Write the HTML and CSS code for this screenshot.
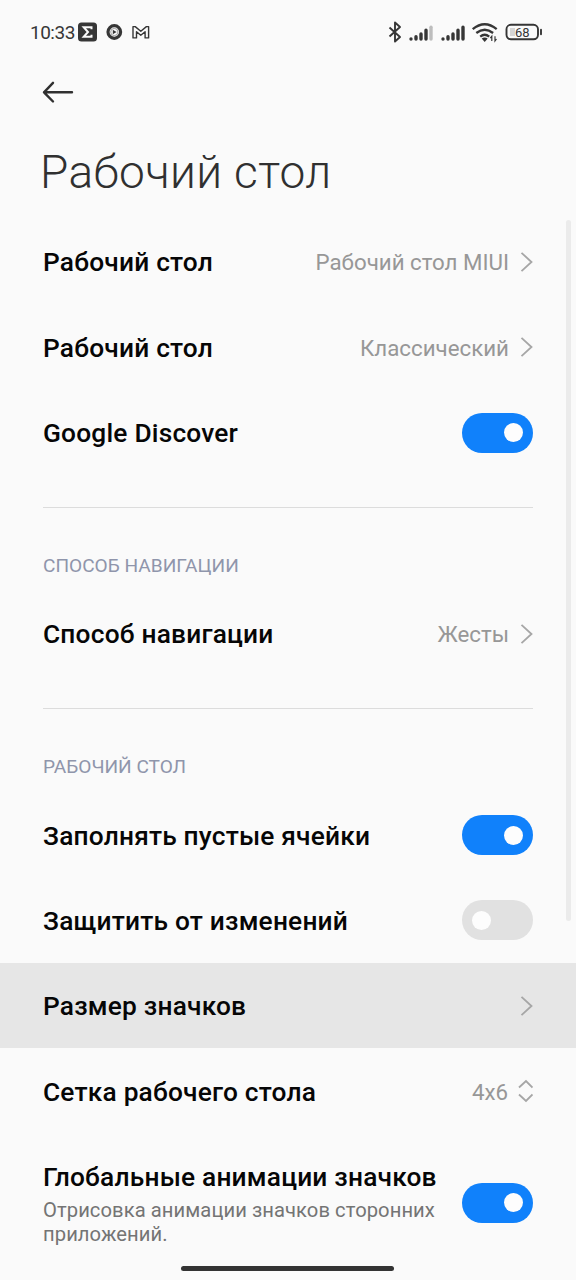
FILE: index.html
```html
<!DOCTYPE html>
<html lang="ru">
<head>
<meta charset="utf-8">
<title>Рабочий стол</title>
<link rel="stylesheet" href="styles.css">
</head>
<body>
<div class="screen">
  <header class="status">
    <span class="clock">10:33</span>
    <svg class="notifications" width="76" height="20" viewBox="0 0 76 20">
      <rect x="1" y="0.500" width="19" height="19" rx="3.500" fill="#363636"/>
      <path d="M14.500 7.200V5.200H6.700L11 10l-4.300 4.800h7.800v-2" fill="none" stroke="#fafafa" stroke-width="2"/>
      <circle cx="37.300" cy="10" r="6.300" fill="none" stroke="#363636" stroke-width="3.200"/>
      <circle cx="37.300" cy="10" r="3.600" fill="none" stroke="#8a8a8a" stroke-width="0.800"/>
      <path d="M35.800 7.700v4.600l3.800-2.300z" fill="#363636"/>
      <path d="M56 15.900V4.600h2.200l5.600 4.700 5.600-4.700h2.200v11.300h-3.500V9.700l-4.300 3.500-4.300-3.500v6.200z" fill="none" stroke="#363636" stroke-width="1.400" stroke-linejoin="round"/>
    </svg>
    <svg class="indicators" width="158" height="24" viewBox="0 0 158 24">
      <path d="M4.500 7.500l10.500 9.500-5 4.500V2.500l5 4.500L4.500 16.500" fill="none" stroke="#363636" stroke-width="1.900" stroke-linejoin="round"/>
      <g stroke="#363636" stroke-width="3.400" stroke-linecap="round">
        <path d="M26 18.900v.2M31 16.800v2.300M36 14v5.100M41 10.200v8.900"/>
        <path d="M46 7.300v11.800" stroke="#bdbdbd"/>
        <path d="M58 18.900v.2M63 16.800v2.300M68 14v5.100M73 10.200v8.900M78 7.300v11.800"/>
      </g>
      <g fill="none" stroke="#363636" stroke-width="2.300">
        <path d="M87.700 9.200q12-9.800 24 0M91.300 13q8.400-6.600 16.800 0M95.200 16.600q4.500-3.600 9 0"/>
      </g>
      <path d="M96.700 18.600q3-2 6 0L99.700 22z" fill="#363636"/>
      <path d="M106.800 21v-4.800l-1.500 2M110 16.200V21l1.500-2" fill="none" stroke="#363636" stroke-width="1.200"/>
      <rect x="121.500" y="4.800" width="31.500" height="14.500" rx="4.500" fill="none" stroke="#363636" stroke-width="1.900"/>
      <path d="M125 8h5v8h-5z" fill="#d6d6d6"/>
      <path d="M156 9.800v4.500" stroke="#363636" stroke-width="1.900" stroke-linecap="round"/>
      <text class="charge" x="137.300" y="16.600" text-anchor="middle">68</text>
    </svg>
  </header>
  <nav class="toolbar">
    <svg width="34" height="24" viewBox="0 0 34 24">
      <path d="M31 12.300H3M12 2.800L3 12.300l9 9.200" fill="none" stroke="#303030" stroke-width="2.400" stroke-linecap="round" stroke-linejoin="round"/>
    </svg>
  </nav>
  <h1 class="title">Рабочий стол</h1>
  <main>
    <div class="row">
      <span class="label">Рабочий стол</span>
      <span class="value">Рабочий стол MIUI</span>
      <svg class="arrow" width="14" height="22" viewBox="0 0 14 22"><path d="M2.500 1.800l10 9.200-10 9.200"/></svg>
    </div>
    <div class="row">
      <span class="label">Рабочий стол</span>
      <span class="value">Классический</span>
      <svg class="arrow" width="14" height="22" viewBox="0 0 14 22"><path d="M2.500 1.800l10 9.200-10 9.200"/></svg>
    </div>
    <div class="row">
      <span class="label">Google Discover</span>
      <span class="switch on"></span>
    </div>
    <section class="group">
      <h2 class="caption">СПОСОБ НАВИГАЦИИ</h2>
      <div class="row">
        <span class="label">Способ навигации</span>
        <span class="value">Жесты</span>
        <svg class="arrow" width="14" height="22" viewBox="0 0 14 22"><path d="M2.500 1.800l10 9.200-10 9.200"/></svg>
      </div>
    </section>
    <section class="group">
      <h2 class="caption">РАБОЧИЙ СТОЛ</h2>
      <div class="row">
        <span class="label">Заполнять пустые ячейки</span>
        <span class="switch on"></span>
      </div>
      <div class="row">
        <span class="label">Защитить от изменений</span>
        <span class="switch"></span>
      </div>
      <div class="row pressed">
        <span class="label">Размер значков</span>
        <svg class="arrow" width="14" height="22" viewBox="0 0 14 22"><path d="M2.500 1.800l10 9.200-10 9.200"/></svg>
      </div>
      <div class="row">
        <span class="label">Сетка рабочего стола</span>
        <span class="value grid-size">4x6</span>
        <svg class="arrow" width="16" height="24" viewBox="0 0 16 24"><path d="M2 8.500l7-6.500 6.500 6.500M2 15.500l7 6.500 6.500-6.500"/></svg>
      </div>
      <div class="row tall">
        <div class="label">Глобальные анимации значков
          <p class="summary">Отрисовка анимации значков сторонних приложений.</p>
        </div>
        <span class="switch on"></span>
      </div>
    </section>
  </main>
  <div class="scrollbar"></div>
  <div class="home-bar"></div>
</div>
</body>
</html>
```
FILE: styles.css
```css
* { box-sizing: border-box; }

body {
  margin: 0;
  background: #fafafa;
  font-family: Roboto, "Noto Sans", sans-serif;
}

.screen {
  position: relative;
  height: 1280px;
  overflow: hidden;
}

.status {
  display: flex;
  align-items: center;
  height: 64px;
  padding: 0 33px 0 30px;
}

.clock {
  width: 47px;
  padding-top: 1px;
  font-size: 19px;
  line-height: 24px;
  letter-spacing: -0.5px;
  color: #363636;
  white-space: nowrap;
}

.indicators { margin-left: auto; }

.charge {
  font-size: 13px;
  font-weight: 400;
  fill: #363636;
}

.toolbar {
  display: flex;
  align-items: center;
  height: 56px;
  padding: 0 41px;
}

.title {
  height: 99.2px;
  margin: 0;
  padding: 24px 40px 0;
  font-size: 46px;
  font-weight: 300;
  line-height: 56px;
  letter-spacing: 0.35px;
  color: #303030;
}

.row {
  display: flex;
  align-items: center;
  height: 85.33px;
  padding: 0 43px;
}

.label {
  flex: 1;
  padding-top: 1px;
  font-size: 26.3px;
  font-weight: 500;
  line-height: 32px;
  letter-spacing: 0.2px;
  color: #060606;
  white-space: nowrap;
}

.value {
  margin-right: 10px;
  padding-top: 1px;
  font-size: 22.3px;
  line-height: 30px;
  color: #979797;
}

.grid-size { margin-right: 9px; }

.arrow {
  flex: none;
  fill: none;
  stroke: #a6a6a6;
  stroke-width: 1.8;
}

.switch {
  display: flex;
  flex: none;
  align-items: center;
  width: 71.5px;
  height: 40px;
  padding: 0 10px;
  border-radius: 20px;
  background: #e1e1e1;
}

.switch::before {
  content: "";
  width: 19px;
  height: 19px;
  border-radius: 50%;
  background: #fdfdfd;
}

.switch.on {
  justify-content: flex-end;
  background: #1081fb;
}

.group::before {
  content: "";
  display: block;
  height: 1px;
  margin: 31.4px 43px 0;
  background: #dcdcdc;
}

.caption {
  height: 83.6px;
  margin: 0;
  padding: 46.5px 43px 0;
  font-size: 19.1px;
  font-weight: 400;
  line-height: 24px;
  color: #8f95ab;
}

.pressed { background: #e6e6e6; }

.tall {
  height: 138px;
}

.summary {
  width: 410px;
  margin: 5px 0 0;
  font-size: 20.2px;
  font-weight: 400;
  line-height: 24px;
  letter-spacing: 0.07px;
  color: #747474;
  white-space: normal;
}

.scrollbar {
  position: absolute;
  top: 220px;
  right: 5px;
  width: 5px;
  height: 701px;
  border-radius: 3px;
  background: #ebebeb;
}

.home-bar {
  position: absolute;
  bottom: 9px;
  left: 181px;
  width: 213px;
  height: 5px;
  border-radius: 3px;
  background: #333;
}
```
